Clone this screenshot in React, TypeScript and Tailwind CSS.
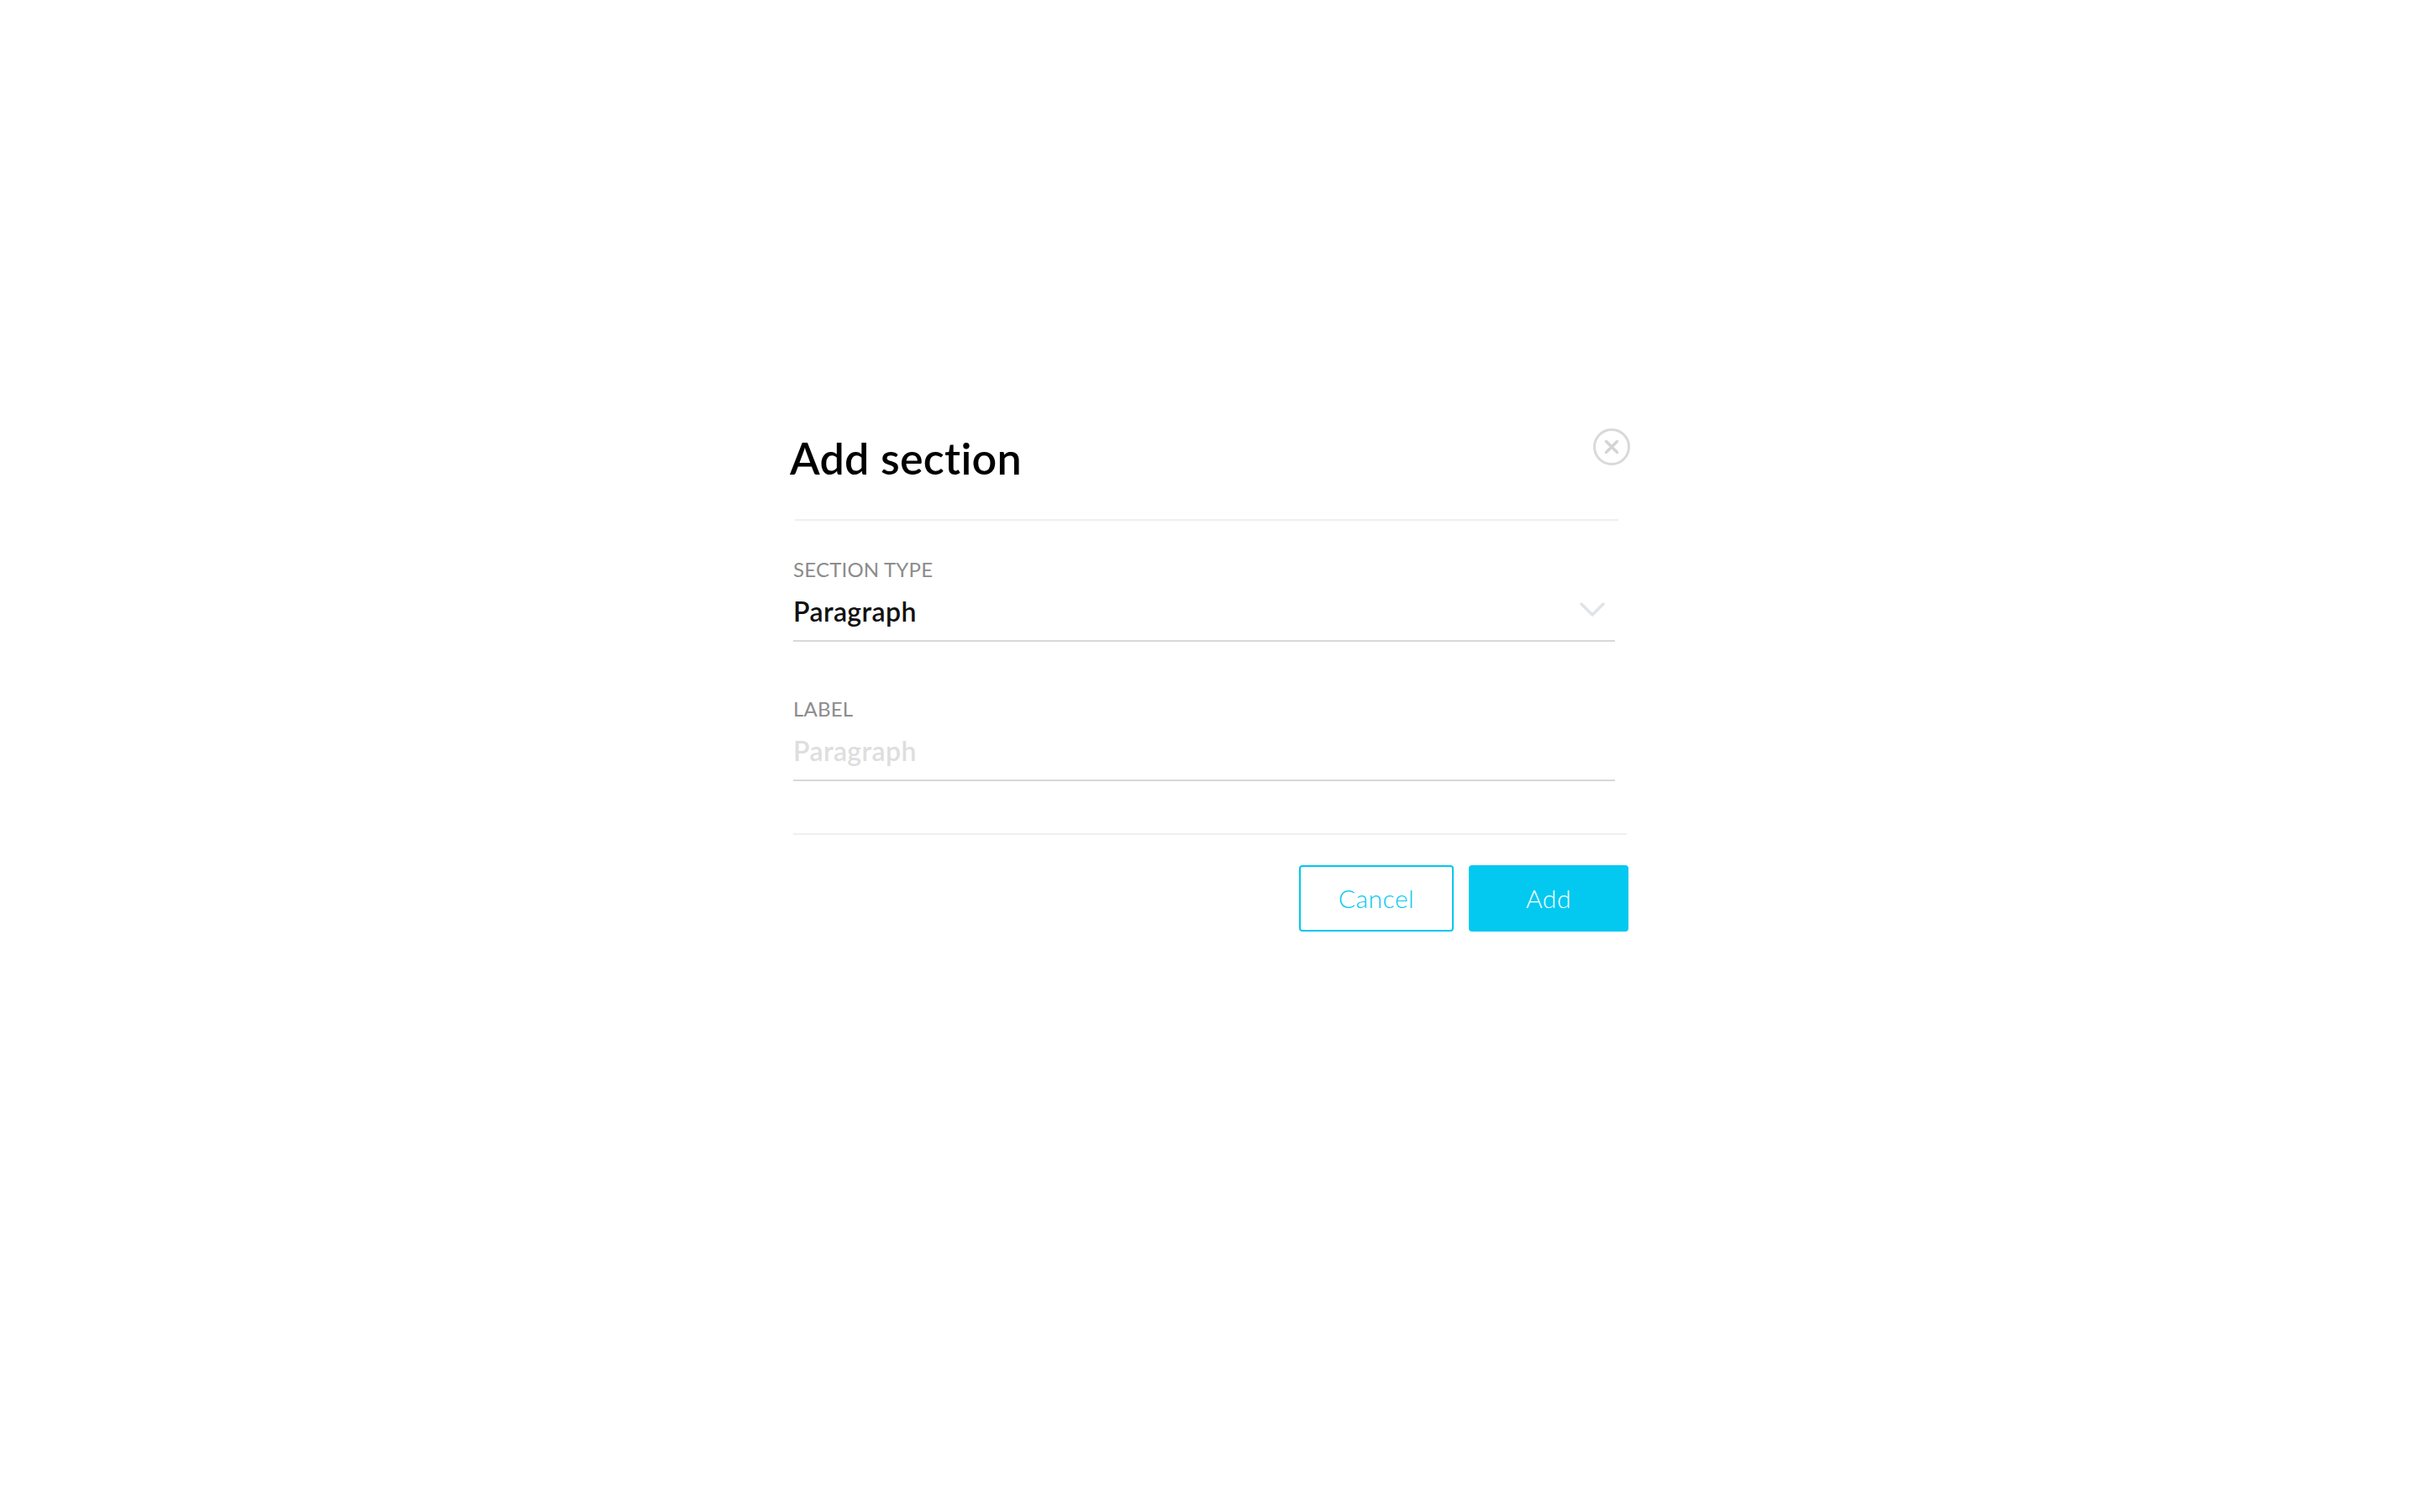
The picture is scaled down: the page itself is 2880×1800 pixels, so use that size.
import { useState } from 'react'

const font = { fontFamily: 'Lato, "Noto Sans", sans-serif' }

function CloseIcon() {
    return (
        <svg width="44" height="44" viewBox="0 0 44 44" fill="none">
            <circle cx="22" cy="22" r="20.5" stroke="#d9d9d9" strokeWidth="3" />
            <path d="M15.5 15.5 L28.5 28.5 M28.5 15.5 L15.5 28.5" stroke="#d4d4d4" strokeWidth="3.4" strokeLinecap="round" />
        </svg>
    )
}

function Chevron() {
    return (
        <svg width="30" height="18" viewBox="0 0 30 18" fill="none">
            <path d="M2 2 L15 15 L28 2" stroke="#dfe4eb" strokeWidth="3.5" strokeLinecap="round" strokeLinejoin="round" />
        </svg>
    )
}

export default function App() {
    const [label, setLabel] = useState('')

    return (
        <div className="min-h-screen w-full bg-white" style={font}>
            <div className="w-[1004px] mx-auto pr-[4px] pt-[510px]">
                {/* Header */}
                <div className="flex items-start justify-between">
                    <h2 className="mt-[3px] ml-[2px] text-[52px] leading-[64px] font-semibold text-black tracking-[0.3px]">Add section</h2>
                    <button className="w-[44px] h-[44px] mr-[-2px]">
                        <CloseIcon />
                    </button>
                </div>

                <div className="mt-[41px] ml-[8px] mr-[12px] h-[2px] bg-[#efefef]" />

                {/* Fields */}
                <div className="pl-[6px] pr-[16px]">
                    <div className="mt-[43px]">
                        <div className="text-[24px] leading-[30px] text-[#8c8c8c] uppercase tracking-[0.2px]">Section type</div>
                        <div className="mt-[15px] flex items-center justify-between border-b-2 border-[#d8d8d8] pb-[14px]">
                            <span className="text-[32px] leading-[40px] font-semibold text-[#111] tracking-[0.4px]">Paragraph</span>
                            <span className="mr-[12px] mt-[-4px]"><Chevron /></span>
                        </div>
                    </div>

                    <div className="mt-[65px]">
                        <div className="text-[24px] leading-[30px] text-[#8c8c8c] uppercase tracking-[0.2px]">Label</div>
                        <div className="mt-[15px] border-b-2 border-[#d8d8d8] pb-[14px]">
                            <input
                                value={label}
                                onChange={(e) => setLabel(e.target.value)}
                                placeholder="Paragraph"
                                className="w-full text-[32px] leading-[40px] h-[40px] font-semibold text-[#111] tracking-[0.4px] placeholder:text-[#dedede] outline-none bg-transparent"
                            />
                        </div>
                    </div>
                </div>

                <div className="mt-[62px] ml-[6px] mr-[2px] h-[2px] bg-[#efefef]" />

                {/* Actions */}
                <div className="mt-[36px] flex justify-end gap-[18px]">
                    <button className="w-[184px] h-[79px] rounded-[4px] border-2 border-[#00c8f0] text-[#00c8f0] text-[30px] font-light tracking-[0.5px]">
                        Cancel
                    </button>
                    <button className="w-[190px] h-[79px] rounded-[4px] bg-[#03c9f0] text-white text-[30px] font-light tracking-[0.5px]">
                        Add
                    </button>
                </div>
            </div>
        </div>
    )
}
